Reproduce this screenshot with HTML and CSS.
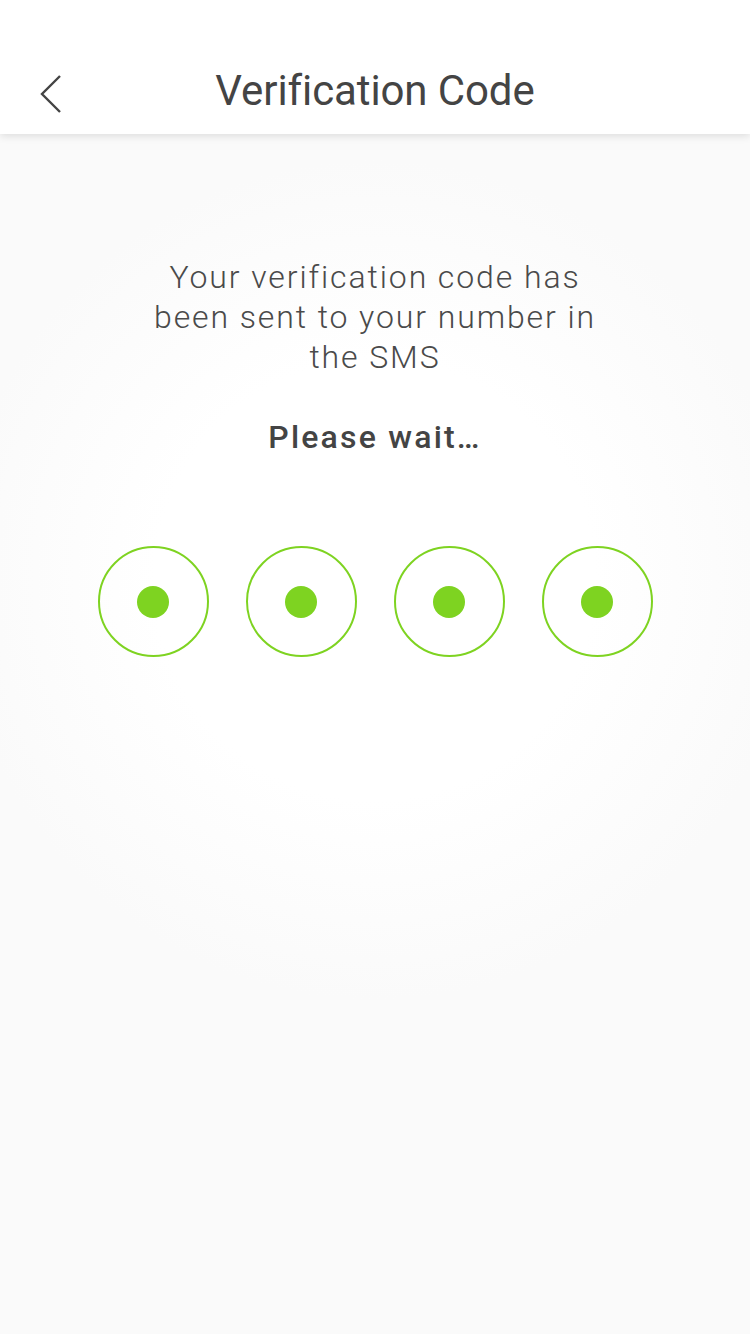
FILE: index.html
```html
<!DOCTYPE html>
<html>
<head>
<meta charset="utf-8">
<link rel="stylesheet" href="styles.css">
</head>
<body>
<div class="screen">
  <header class="topbar">
    <button class="back" aria-label="Back">
      <svg width="24" height="40" viewBox="0 0 24 40"><path d="M21 2 L3 20 L21 38" fill="none" stroke="#444" stroke-width="2.4" stroke-linejoin="miter"/></svg>
    </button>
    <h1 class="title">Verification Code</h1>
  </header>
  <main class="content">
    <p class="message">Your verification code has been sent to your number in the SMS</p>
    <p class="wait">Please wait…</p>
    <div class="code">
      <div class="ring"><span class="dot"></span></div>
      <div class="ring"><span class="dot"></span></div>
      <div class="ring"><span class="dot"></span></div>
      <div class="ring"><span class="dot"></span></div>
    </div>
  </main>
</div>
</body>
</html>
```
FILE: styles.css
```css
html, body {
  margin: 0;
  padding: 0;
}
body {
  width: 750px;
  height: 1334px;
  overflow: hidden;
  font-family: Roboto, "Liberation Sans", sans-serif;
  color: #444;
}
.screen {
  height: 1334px;
  display: flex;
  flex-direction: column;
  background: radial-gradient(circle at 375px 580px, #ffffff 0, #ffffff 220px, #fafafa 420px, #fafafa 100%);
}
.topbar {
  position: relative;
  height: 134px;
  background: #fff;
  box-shadow: 0 2px 8px rgba(0,0,0,0.12);
  display: flex;
  align-items: flex-end;
  justify-content: center;
  z-index: 1;
}
.back {
  position: absolute;
  left: 38px;
  top: 74px;
  border: 0;
  background: none;
  padding: 0;
  width: 26px;
  height: 42px;
}
.title {
  margin: 0 0 18px;
  font-size: 42px;
  font-weight: 400;
  color: #444;
  letter-spacing: -0.1px;
  line-height: 50px;
}
.content {
  display: flex;
  flex-direction: column;
  align-items: center;
  padding-top: 123px;
}
.message {
  margin: 0;
  width: 470px;
  text-align: center;
  font-size: 32px;
  font-weight: 300;
  line-height: 40px;
  color: #4a4a4a;
  letter-spacing: 1.9px;
}
.wait {
  margin: 40px 0 0;
  font-size: 32px;
  font-weight: 500;
  line-height: 40px;
  color: #444;
  letter-spacing: 2.2px;
}
.code {
  margin-top: 89px;
  display: flex;
  gap: 37px;
}
.ring {
  width: 107px;
  height: 107px;
  border: 2px solid #7ed321;
  border-radius: 50%;
  display: flex;
  align-items: center;
  justify-content: center;
}
.dot {
  width: 32px;
  height: 32px;
  border-radius: 50%;
  background: #7ed321;
}
```
